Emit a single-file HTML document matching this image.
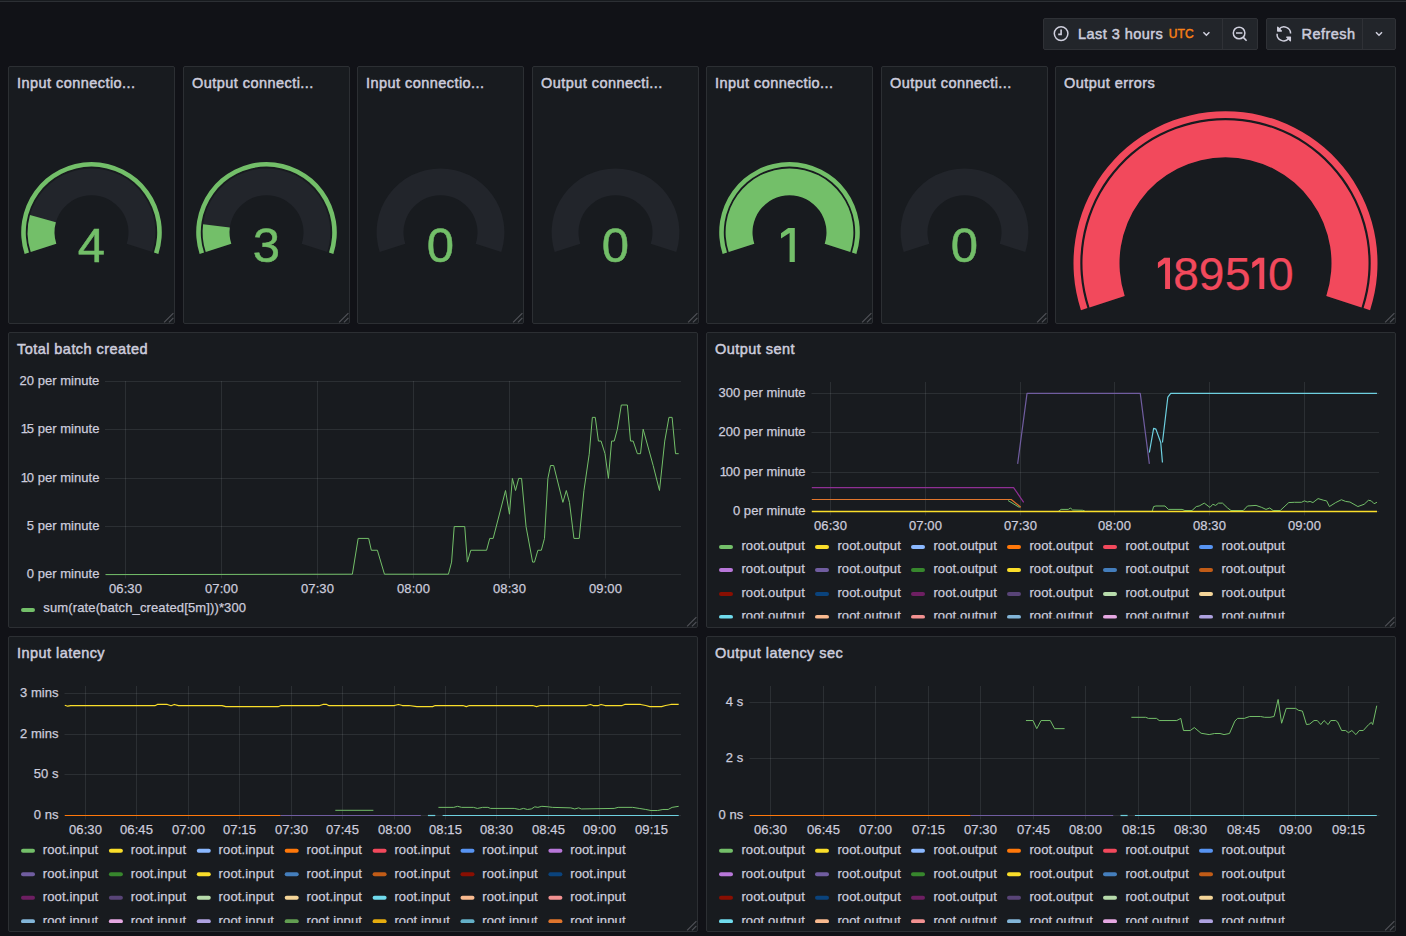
<!DOCTYPE html>
<html><head><meta charset="utf-8"><style>
html,body{margin:0;padding:0;background:#111217;width:1406px;height:936px;overflow:hidden}
.p{position:absolute;background:#181b1f;border:1px solid #2c2f33;border-radius:2px}
.tb{position:absolute;background:#22252a;border:1px solid #2f3136;border-radius:2px}
.tbd{position:absolute;background:#2f3136}
svg{position:absolute;left:0;top:0}
text{font-family:'Liberation Sans', sans-serif}
.t13{stroke:#ccccdc;stroke-width:0.25px}
</style></head><body>
<div class="p" style="left:8px;top:66px;width:165px;height:256px"></div>
<div class="p" style="left:183px;top:66px;width:165px;height:256px"></div>
<div class="p" style="left:357px;top:66px;width:165px;height:256px"></div>
<div class="p" style="left:532px;top:66px;width:165px;height:256px"></div>
<div class="p" style="left:706px;top:66px;width:165px;height:256px"></div>
<div class="p" style="left:881px;top:66px;width:165px;height:256px"></div>
<div class="p" style="left:1055px;top:66px;width:339px;height:256px"></div>
<div class="p" style="left:8px;top:332px;width:688px;height:294px"></div>
<div class="p" style="left:706px;top:332px;width:688px;height:294px"></div>
<div class="p" style="left:8px;top:636px;width:688px;height:294px"></div>
<div class="p" style="left:706px;top:636px;width:688px;height:294px"></div>
<div class="tb" style="left:1043px;top:18px;width:213px;height:30px"></div>
<div class="tbd" style="left:1222px;top:19px;width:1px;height:30px"></div>
<div class="tb" style="left:1266px;top:18px;width:128px;height:30px"></div>
<div class="tbd" style="left:1362px;top:19px;width:1px;height:30px"></div>
<div style="position:absolute;left:0;top:0;width:1406px;height:1px;background:#181b1f"></div>
<div style="position:absolute;left:0;top:1px;width:1406px;height:1px;background:#2c2f34"></div>
<svg width="1406" height="936" viewBox="0 0 1406 936">
<path d="M164.1 322.4 L173.4 313.1 M168.9 322.4 L173.4 317.9" stroke="#4f5157" stroke-width="1.2" fill="none"/>
<path d="M339.1 322.4 L348.4 313.1 M343.9 322.4 L348.4 317.9" stroke="#4f5157" stroke-width="1.2" fill="none"/>
<path d="M513.1 322.4 L522.4 313.1 M517.9 322.4 L522.4 317.9" stroke="#4f5157" stroke-width="1.2" fill="none"/>
<path d="M688.1 322.4 L697.4 313.1 M692.9 322.4 L697.4 317.9" stroke="#4f5157" stroke-width="1.2" fill="none"/>
<path d="M862.1 322.4 L871.4 313.1 M866.9 322.4 L871.4 317.9" stroke="#4f5157" stroke-width="1.2" fill="none"/>
<path d="M1037.1 322.4 L1046.4 313.1 M1041.9 322.4 L1046.4 317.9" stroke="#4f5157" stroke-width="1.2" fill="none"/>
<path d="M1385.1 322.4 L1394.4 313.1 M1389.9 322.4 L1394.4 317.9" stroke="#4f5157" stroke-width="1.2" fill="none"/>
<path d="M687.1 626.4 L696.4 617.1 M691.9 626.4 L696.4 621.9" stroke="#4f5157" stroke-width="1.2" fill="none"/>
<path d="M1385.1 626.4 L1394.4 617.1 M1389.9 626.4 L1394.4 621.9" stroke="#4f5157" stroke-width="1.2" fill="none"/>
<path d="M687.1 930.4 L696.4 921.1 M691.9 930.4 L696.4 925.9" stroke="#4f5157" stroke-width="1.2" fill="none"/>
<path d="M1385.1 930.4 L1394.4 921.1 M1389.9 930.4 L1394.4 925.9" stroke="#4f5157" stroke-width="1.2" fill="none"/>
<text x="17.00" y="88.00" font-size="14.5" font-weight="normal" fill="#ccccdc" text-anchor="start" letter-spacing="0.45" stroke="#ccccdc" stroke-width="0.5">Input connectio...</text>
<text x="192.00" y="88.00" font-size="14.5" font-weight="normal" fill="#ccccdc" text-anchor="start" letter-spacing="0.45" stroke="#ccccdc" stroke-width="0.5">Output connecti...</text>
<text x="366.00" y="88.00" font-size="14.5" font-weight="normal" fill="#ccccdc" text-anchor="start" letter-spacing="0.45" stroke="#ccccdc" stroke-width="0.5">Input connectio...</text>
<text x="541.00" y="88.00" font-size="14.5" font-weight="normal" fill="#ccccdc" text-anchor="start" letter-spacing="0.45" stroke="#ccccdc" stroke-width="0.5">Output connecti...</text>
<text x="715.00" y="88.00" font-size="14.5" font-weight="normal" fill="#ccccdc" text-anchor="start" letter-spacing="0.45" stroke="#ccccdc" stroke-width="0.5">Input connectio...</text>
<text x="890.00" y="88.00" font-size="14.5" font-weight="normal" fill="#ccccdc" text-anchor="start" letter-spacing="0.45" stroke="#ccccdc" stroke-width="0.5">Output connecti...</text>
<text x="1064.00" y="88.00" font-size="14.5" font-weight="normal" fill="#ccccdc" text-anchor="start" letter-spacing="0.45" stroke="#ccccdc" stroke-width="0.5">Output errors</text>
<text x="17.00" y="354.40" font-size="14.5" font-weight="normal" fill="#ccccdc" text-anchor="start" letter-spacing="0.45" stroke="#ccccdc" stroke-width="0.5">Total batch created</text>
<text x="715.00" y="354.40" font-size="14.5" font-weight="normal" fill="#ccccdc" text-anchor="start" letter-spacing="0.45" stroke="#ccccdc" stroke-width="0.5">Output sent</text>
<text x="17.00" y="658.40" font-size="14.5" font-weight="normal" fill="#ccccdc" text-anchor="start" letter-spacing="0.45" stroke="#ccccdc" stroke-width="0.5">Input latency</text>
<text x="715.00" y="658.40" font-size="14.5" font-weight="normal" fill="#ccccdc" text-anchor="start" letter-spacing="0.45" stroke="#ccccdc" stroke-width="0.5">Output latency sec</text>
<path d="M30.73 252.05 A63.9 63.9 0 1 1 152.27 252.05 L126.69 243.73 A37.0 37.0 0 1 0 56.31 243.73 Z" fill="#22252b"/>
<path d="M30.73 252.05 A63.9 63.9 0 0 1 29.98 215.01 L55.88 222.29 A37.0 37.0 0 0 0 56.31 243.73 Z" fill="#73bf69"/>
<path d="M24.64 254.02 A70.3 70.3 0 1 1 158.36 254.02 L153.98 252.60 A65.7 65.7 0 1 0 29.02 252.60 Z" fill="#73bf69"/>
<text x="91.50" y="262.30" font-size="49" font-weight="normal" fill="#73bf69" text-anchor="middle" stroke="#73bf69" stroke-width="0.5">4</text>
<path d="M205.73 252.05 A63.9 63.9 0 1 1 327.27 252.05 L301.69 243.73 A37.0 37.0 0 1 0 231.31 243.73 Z" fill="#22252b"/>
<path d="M205.73 252.05 A63.9 63.9 0 0 1 203.12 224.18 L229.80 227.60 A37.0 37.0 0 0 0 231.31 243.73 Z" fill="#73bf69"/>
<path d="M199.64 254.02 A70.3 70.3 0 1 1 333.36 254.02 L328.98 252.60 A65.7 65.7 0 1 0 204.02 252.60 Z" fill="#73bf69"/>
<text x="266.50" y="262.30" font-size="49" font-weight="normal" fill="#73bf69" text-anchor="middle" stroke="#73bf69" stroke-width="0.5">3</text>
<path d="M379.73 252.05 A63.9 63.9 0 1 1 501.27 252.05 L475.69 243.73 A37.0 37.0 0 1 0 405.31 243.73 Z" fill="#22252b"/>
<text x="440.50" y="262.30" font-size="49" font-weight="normal" fill="#73bf69" text-anchor="middle" stroke="#73bf69" stroke-width="0.5">0</text>
<path d="M554.73 252.05 A63.9 63.9 0 1 1 676.27 252.05 L650.69 243.73 A37.0 37.0 0 1 0 580.31 243.73 Z" fill="#22252b"/>
<text x="615.50" y="262.30" font-size="49" font-weight="normal" fill="#73bf69" text-anchor="middle" stroke="#73bf69" stroke-width="0.5">0</text>
<path d="M728.73 252.05 A63.9 63.9 0 1 1 850.27 252.05 L824.69 243.73 A37.0 37.0 0 1 0 754.31 243.73 Z" fill="#22252b"/>
<path d="M728.73 252.05 A63.9 63.9 0 1 1 850.27 252.05 L824.69 243.73 A37.0 37.0 0 1 0 754.31 243.73 Z" fill="#73bf69"/>
<path d="M722.64 254.02 A70.3 70.3 0 1 1 856.36 254.02 L851.98 252.60 A65.7 65.7 0 1 0 727.02 252.60 Z" fill="#73bf69"/>
<path d="M788.20 228 L794.80 228 L794.80 262 L789.60 262 L789.60 233 L781.00 238.6 L781.00 233.2 Z" fill="#73bf69"/>
<path d="M903.73 252.05 A63.9 63.9 0 1 1 1025.27 252.05 L999.69 243.73 A37.0 37.0 0 1 0 929.31 243.73 Z" fill="#22252b"/>
<text x="964.50" y="262.30" font-size="49" font-weight="normal" fill="#73bf69" text-anchor="middle" stroke="#73bf69" stroke-width="0.5">0</text>
<path d="M1089.50 307.39 A143 143 0 1 1 1361.50 307.39 L1326.31 295.96 A106 106 0 1 0 1124.69 295.96 Z" fill="#22252b"/>
<path d="M1089.50 307.39 A143 143 0 1 1 1361.50 307.39 L1326.31 295.96 A106 106 0 1 0 1124.69 295.96 Z" fill="#f2495c"/>
<path d="M1080.94 310.17 A152 152 0 1 1 1370.06 310.17 L1363.59 308.07 A145.2 145.2 0 1 0 1087.41 308.07 Z" fill="#f2495c"/>
<path d="M1164.30 257.8 L1170.00 257.8 L1170.00 289 L1165.10 289 L1165.10 263.2 L1157.90 268.2 L1157.90 262.6 Z" fill="#f2495c"/>
<path d="M1258.60 257.8 L1264.30 257.8 L1264.30 289 L1259.40 289 L1259.40 263.2 L1252.20 268.2 L1252.20 262.6 Z" fill="#f2495c"/>
<text x="1186.05" y="289.5" font-size="46" fill="#f2495c" text-anchor="middle" stroke="#f2495c" stroke-width="0.25">8</text>
<text x="1211.6" y="289.5" font-size="46" fill="#f2495c" text-anchor="middle" stroke="#f2495c" stroke-width="0.25">9</text>
<text x="1237.75" y="289.5" font-size="46" fill="#f2495c" text-anchor="middle" stroke="#f2495c" stroke-width="0.25">5</text>
<text x="1280.7" y="289.5" font-size="46" fill="#f2495c" text-anchor="middle" stroke="#f2495c" stroke-width="0.25">0</text>
<text x="1078.00" y="39.20" font-size="14.5" font-weight="normal" fill="#ccccdc" text-anchor="start" letter-spacing="0.45" stroke="#ccccdc" stroke-width="0.5">Last 3 hours</text>
<text x="1168.80" y="38.00" font-size="12" font-weight="normal" fill="#f98016" text-anchor="start" stroke="#f98016" stroke-width="0.45" letter-spacing="0.1">UTC</text>
<text x="1301.50" y="39.20" font-size="14.5" font-weight="normal" fill="#ccccdc" text-anchor="start" letter-spacing="0.45" stroke="#ccccdc" stroke-width="0.5">Refresh</text>
<circle cx="1061.1" cy="33.6" r="6.8" stroke="#d0d0de" stroke-width="1.5" fill="none"/>
<path d="M1061.1 29.6 V34.4 H1058.2" stroke="#d0d0de" stroke-width="1.6" fill="none"/>
<path d="M1203.4 32.2 L1206.4 35.2 L1209.4 32.2" stroke="#d0d0de" stroke-width="1.5" fill="none"/>
<path d="M1376.0 32.2 L1379.0 35.2 L1382.0 32.2" stroke="#d0d0de" stroke-width="1.5" fill="none"/>
<circle cx="1239.1" cy="33" r="5.8" stroke="#d0d0de" stroke-width="1.5" fill="none"/>
<path d="M1236 33 H1242.4 M1243.3 37.4 L1246.6 40.7" stroke="#d0d0de" stroke-width="1.6" fill="none"/>
<path d="M1279.0 29.2 A6.6 6.6 0 0 1 1290.6 33.6" stroke="#d0d0de" stroke-width="1.5" fill="none"/>
<path d="M1277.1 33.7 A6.6 6.6 0 0 0 1288.9 38.3" stroke="#d0d0de" stroke-width="1.5" fill="none"/>
<path d="M1277.7 27.3 V31.0 H1281.4 Z" stroke="#d0d0de" stroke-width="1.3" stroke-linejoin="round" fill="#d0d0de"/>
<path d="M1286.7 37.1 H1290.4 V40.8 Z" stroke="#d0d0de" stroke-width="1.3" stroke-linejoin="round" fill="#d0d0de"/>
<path d="M105.0 381.5 H681.0" stroke="rgba(240,250,255,0.09)" stroke-width="1" fill="none"/>
<path d="M105.0 429.5 H681.0" stroke="rgba(240,250,255,0.09)" stroke-width="1" fill="none"/>
<path d="M105.0 478.5 H681.0" stroke="rgba(240,250,255,0.09)" stroke-width="1" fill="none"/>
<path d="M105.0 526.5 H681.0" stroke="rgba(240,250,255,0.09)" stroke-width="1" fill="none"/>
<path d="M105.0 574.5 H681.0" stroke="rgba(240,250,255,0.09)" stroke-width="1" fill="none"/>
<path d="M125.5 381.0 V578.5" stroke="rgba(240,250,255,0.09)" stroke-width="1" fill="none"/>
<path d="M221.5 381.0 V578.5" stroke="rgba(240,250,255,0.09)" stroke-width="1" fill="none"/>
<path d="M317.5 381.0 V578.5" stroke="rgba(240,250,255,0.09)" stroke-width="1" fill="none"/>
<path d="M413.5 381.0 V578.5" stroke="rgba(240,250,255,0.09)" stroke-width="1" fill="none"/>
<path d="M509.5 381.0 V578.5" stroke="rgba(240,250,255,0.09)" stroke-width="1" fill="none"/>
<path d="M605.5 381.0 V578.5" stroke="rgba(240,250,255,0.09)" stroke-width="1" fill="none"/>
<text x="99.40" y="385.30" font-size="13" font-weight="normal" fill="#ccccdc" text-anchor="end" letter-spacing="0.03" class="t13">20 per minute</text>
<text x="99.40" y="433.30" font-size="13" font-weight="normal" fill="#ccccdc" text-anchor="end" letter-spacing="0.03" class="t13"><tspan letter-spacing="-1.3">1</tspan>5 per minute</text>
<text x="99.40" y="482.30" font-size="13" font-weight="normal" fill="#ccccdc" text-anchor="end" letter-spacing="0.03" class="t13"><tspan letter-spacing="-1.3">1</tspan>0 per minute</text>
<text x="99.40" y="530.30" font-size="13" font-weight="normal" fill="#ccccdc" text-anchor="end" letter-spacing="0.03" class="t13">5 per minute</text>
<text x="99.40" y="578.30" font-size="13" font-weight="normal" fill="#ccccdc" text-anchor="end" letter-spacing="0.03" class="t13">0 per minute</text>
<text x="125.50" y="593.30" font-size="13" font-weight="normal" fill="#ccccdc" text-anchor="middle" letter-spacing="0.1" class="t13">06:30</text>
<text x="221.50" y="593.30" font-size="13" font-weight="normal" fill="#ccccdc" text-anchor="middle" letter-spacing="0.1" class="t13">07:00</text>
<text x="317.50" y="593.30" font-size="13" font-weight="normal" fill="#ccccdc" text-anchor="middle" letter-spacing="0.1" class="t13">07:30</text>
<text x="413.50" y="593.30" font-size="13" font-weight="normal" fill="#ccccdc" text-anchor="middle" letter-spacing="0.1" class="t13">08:00</text>
<text x="509.50" y="593.30" font-size="13" font-weight="normal" fill="#ccccdc" text-anchor="middle" letter-spacing="0.1" class="t13">08:30</text>
<text x="605.50" y="593.30" font-size="13" font-weight="normal" fill="#ccccdc" text-anchor="middle" letter-spacing="0.1" class="t13">09:00</text>
<polyline points="105.60,574.60 352.37,574.21 358.16,538.42 368.68,538.42 371.32,550.26 377.37,550.26 384.47,574.21 448.42,574.21 451.58,562.11 454.21,526.58 464.74,526.58 467.37,562.11 470.79,550.26 486.58,550.26 489.74,538.42 493.16,538.42 505.53,490.53 509.47,514.21 512.37,478.42 515.53,490.53 518.68,478.42 521.58,478.42 526.05,526.58 532.63,562.11 534.47,562.11 537.89,550.26 541.32,550.26 544.47,538.42 547.89,478.42 550.53,465.53 553.68,465.53 562.89,502.37 566.32,490.53 569.47,502.37 573.95,538.42 579.21,538.42 583.95,490.53 589.21,454.21 592.37,417.37 595.26,417.37 598.42,441.05 601.05,441.05 605.00,453.68 608.42,478.42 611.58,441.05 614.21,441.05 617.37,429.21 621.32,405.00 627.37,405.00 630.53,441.05 633.16,441.05 637.37,453.68 640.53,453.68 643.16,429.21 653.16,465.53 659.47,490.53 664.74,441.05 668.95,417.37 672.11,417.37 675.53,453.68 678.68,453.68" stroke="#73bf69" stroke-width="1.0" fill="none" stroke-linejoin="round"/>
<rect x="21.0" y="608.0" width="14" height="4" rx="2" fill="#73bf69"/>
<text x="43.30" y="612.40" font-size="13" font-weight="normal" fill="#ccccdc" text-anchor="start" letter-spacing="0.13" class="t13">sum(rate(batch_created[5m]))*300</text>
<path d="M811.5 393.5 H1379.0" stroke="rgba(240,250,255,0.09)" stroke-width="1" fill="none"/>
<path d="M811.5 432.5 H1379.0" stroke="rgba(240,250,255,0.09)" stroke-width="1" fill="none"/>
<path d="M811.5 472.5 H1379.0" stroke="rgba(240,250,255,0.09)" stroke-width="1" fill="none"/>
<path d="M811.5 511.5 H1379.0" stroke="rgba(240,250,255,0.09)" stroke-width="1" fill="none"/>
<path d="M830.5 382.0 V515.5" stroke="rgba(240,250,255,0.09)" stroke-width="1" fill="none"/>
<path d="M925.5 382.0 V515.5" stroke="rgba(240,250,255,0.09)" stroke-width="1" fill="none"/>
<path d="M1020.5 382.0 V515.5" stroke="rgba(240,250,255,0.09)" stroke-width="1" fill="none"/>
<path d="M1114.5 382.0 V515.5" stroke="rgba(240,250,255,0.09)" stroke-width="1" fill="none"/>
<path d="M1209.5 382.0 V515.5" stroke="rgba(240,250,255,0.09)" stroke-width="1" fill="none"/>
<path d="M1304.5 382.0 V515.5" stroke="rgba(240,250,255,0.09)" stroke-width="1" fill="none"/>
<text x="805.60" y="397.30" font-size="13" font-weight="normal" fill="#ccccdc" text-anchor="end" letter-spacing="0.03" class="t13">300 per minute</text>
<text x="805.60" y="436.30" font-size="13" font-weight="normal" fill="#ccccdc" text-anchor="end" letter-spacing="0.03" class="t13">200 per minute</text>
<text x="805.60" y="476.30" font-size="13" font-weight="normal" fill="#ccccdc" text-anchor="end" letter-spacing="0.03" class="t13"><tspan letter-spacing="-1.3">1</tspan>00 per minute</text>
<text x="805.60" y="515.30" font-size="13" font-weight="normal" fill="#ccccdc" text-anchor="end" letter-spacing="0.03" class="t13">0 per minute</text>
<text x="830.50" y="530.00" font-size="13" font-weight="normal" fill="#ccccdc" text-anchor="middle" letter-spacing="0.1" class="t13">06:30</text>
<text x="925.50" y="530.00" font-size="13" font-weight="normal" fill="#ccccdc" text-anchor="middle" letter-spacing="0.1" class="t13">07:00</text>
<text x="1020.50" y="530.00" font-size="13" font-weight="normal" fill="#ccccdc" text-anchor="middle" letter-spacing="0.1" class="t13">07:30</text>
<text x="1114.50" y="530.00" font-size="13" font-weight="normal" fill="#ccccdc" text-anchor="middle" letter-spacing="0.1" class="t13">08:00</text>
<text x="1209.50" y="530.00" font-size="13" font-weight="normal" fill="#ccccdc" text-anchor="middle" letter-spacing="0.1" class="t13">08:30</text>
<text x="1304.50" y="530.00" font-size="13" font-weight="normal" fill="#ccccdc" text-anchor="middle" letter-spacing="0.1" class="t13">09:00</text>
<polyline points="811.80,487.60 1013.60,487.60 1023.70,502.40" stroke="#8f2f94" stroke-width="1.2" fill="none" stroke-linejoin="round"/>
<polyline points="811.80,499.50 1011.20,499.50 1020.80,507.20" stroke="#e0752d" stroke-width="1.2" fill="none" stroke-linejoin="round"/>
<polyline points="1008.00,500.50 1019.50,507.50" stroke="#73bf69" stroke-width="1.0" fill="none" stroke-linejoin="round"/>
<polyline points="1017.64,463.88 1027.03,393.33 1140.26,393.33 1149.36,463.88" stroke="#705da0" stroke-width="1.2" fill="none" stroke-linejoin="round"/>
<polyline points="1149.36,452.50 1153.63,428.32 1155.90,429.17 1160.74,442.55 1162.45,462.46" stroke="#6ed0e0" stroke-width="1.2" fill="none" stroke-linejoin="round"/>
<polyline points="1162.45,442.55 1167.85,397.03 1170.70,393.33 1376.96,393.33" stroke="#6ed0e0" stroke-width="1.2" fill="none" stroke-linejoin="round"/>
<polyline points="1058.32,511.39 1061.17,509.40 1068.28,509.40 1070.55,507.98 1072.55,509.97 1082.50,510.26 1085.35,511.39 1152.20,511.39 1153.63,506.56 1155.90,505.99 1165.01,505.99 1168.42,509.40 1182.08,509.40 1184.92,510.54 1192.03,510.54 1196.30,506.56 1199.15,505.99 1204.27,503.14 1209.96,507.41 1212.80,504.28 1215.65,505.42 1218.49,503.14 1222.48,503.14 1227.60,507.98 1231.01,510.54 1243.24,510.54 1247.51,505.99 1256.05,505.42 1261.74,507.41 1266.00,509.40 1269.70,507.98 1273.12,510.54 1280.23,510.54 1288.76,502.57 1294.45,502.29 1301.56,502.29 1304.41,500.87 1307.25,502.01 1310.10,501.44 1312.94,502.57 1318.07,498.59 1323.76,500.30 1326.60,500.87 1329.45,506.56 1335.70,502.57 1341.39,499.73 1345.66,501.44 1349.93,502.01 1357.89,506.56 1364.15,504.28 1368.42,500.30 1371.27,500.87 1374.11,503.71 1376.96,502.29" stroke="#73bf69" stroke-width="1.0" fill="none" stroke-linejoin="round"/>
<polyline points="811.80,511.50 1377.00,511.50" stroke="#fade2a" stroke-width="1.6" fill="none" stroke-linejoin="round"/>
<clipPath id="cb"><rect x="0" y="0" width="1406" height="618.5"/></clipPath>
<g clip-path="url(#cb)">
<rect x="719.0" y="545.0" width="14" height="4" rx="2" fill="#73bf69"/>
<text x="741.40" y="549.60" font-size="13" font-weight="normal" fill="#ccccdc" text-anchor="start" letter-spacing="0.13" class="t13">root.output</text>
<rect x="815.0" y="545.0" width="14" height="4" rx="2" fill="#fade2a"/>
<text x="837.40" y="549.60" font-size="13" font-weight="normal" fill="#ccccdc" text-anchor="start" letter-spacing="0.13" class="t13">root.output</text>
<rect x="911.0" y="545.0" width="14" height="4" rx="2" fill="#8ab8ff"/>
<text x="933.40" y="549.60" font-size="13" font-weight="normal" fill="#ccccdc" text-anchor="start" letter-spacing="0.13" class="t13">root.output</text>
<rect x="1007.0" y="545.0" width="14" height="4" rx="2" fill="#ff780a"/>
<text x="1029.40" y="549.60" font-size="13" font-weight="normal" fill="#ccccdc" text-anchor="start" letter-spacing="0.13" class="t13">root.output</text>
<rect x="1103.0" y="545.0" width="14" height="4" rx="2" fill="#f2495c"/>
<text x="1125.40" y="549.60" font-size="13" font-weight="normal" fill="#ccccdc" text-anchor="start" letter-spacing="0.13" class="t13">root.output</text>
<rect x="1199.0" y="545.0" width="14" height="4" rx="2" fill="#5794f2"/>
<text x="1221.40" y="549.60" font-size="13" font-weight="normal" fill="#ccccdc" text-anchor="start" letter-spacing="0.13" class="t13">root.output</text>
<rect x="719.0" y="567.9" width="14" height="4" rx="2" fill="#b877d9"/>
<text x="741.40" y="572.50" font-size="13" font-weight="normal" fill="#ccccdc" text-anchor="start" letter-spacing="0.13" class="t13">root.output</text>
<rect x="815.0" y="567.9" width="14" height="4" rx="2" fill="#705da0"/>
<text x="837.40" y="572.50" font-size="13" font-weight="normal" fill="#ccccdc" text-anchor="start" letter-spacing="0.13" class="t13">root.output</text>
<rect x="911.0" y="567.9" width="14" height="4" rx="2" fill="#37872d"/>
<text x="933.40" y="572.50" font-size="13" font-weight="normal" fill="#ccccdc" text-anchor="start" letter-spacing="0.13" class="t13">root.output</text>
<rect x="1007.0" y="567.9" width="14" height="4" rx="2" fill="#fade2a"/>
<text x="1029.40" y="572.50" font-size="13" font-weight="normal" fill="#ccccdc" text-anchor="start" letter-spacing="0.13" class="t13">root.output</text>
<rect x="1103.0" y="567.9" width="14" height="4" rx="2" fill="#447ebc"/>
<text x="1125.40" y="572.50" font-size="13" font-weight="normal" fill="#ccccdc" text-anchor="start" letter-spacing="0.13" class="t13">root.output</text>
<rect x="1199.0" y="567.9" width="14" height="4" rx="2" fill="#c15c17"/>
<text x="1221.40" y="572.50" font-size="13" font-weight="normal" fill="#ccccdc" text-anchor="start" letter-spacing="0.13" class="t13">root.output</text>
<rect x="719.0" y="592.0" width="14" height="4" rx="2" fill="#890f02"/>
<text x="741.40" y="596.60" font-size="13" font-weight="normal" fill="#ccccdc" text-anchor="start" letter-spacing="0.13" class="t13">root.output</text>
<rect x="815.0" y="592.0" width="14" height="4" rx="2" fill="#0a437c"/>
<text x="837.40" y="596.60" font-size="13" font-weight="normal" fill="#ccccdc" text-anchor="start" letter-spacing="0.13" class="t13">root.output</text>
<rect x="911.0" y="592.0" width="14" height="4" rx="2" fill="#6d1f62"/>
<text x="933.40" y="596.60" font-size="13" font-weight="normal" fill="#ccccdc" text-anchor="start" letter-spacing="0.13" class="t13">root.output</text>
<rect x="1007.0" y="592.0" width="14" height="4" rx="2" fill="#584477"/>
<text x="1029.40" y="596.60" font-size="13" font-weight="normal" fill="#ccccdc" text-anchor="start" letter-spacing="0.13" class="t13">root.output</text>
<rect x="1103.0" y="592.0" width="14" height="4" rx="2" fill="#b7dbab"/>
<text x="1125.40" y="596.60" font-size="13" font-weight="normal" fill="#ccccdc" text-anchor="start" letter-spacing="0.13" class="t13">root.output</text>
<rect x="1199.0" y="592.0" width="14" height="4" rx="2" fill="#f4d598"/>
<text x="1221.40" y="596.60" font-size="13" font-weight="normal" fill="#ccccdc" text-anchor="start" letter-spacing="0.13" class="t13">root.output</text>
<rect x="719.0" y="615.0" width="14" height="4" rx="2" fill="#70dbed"/>
<text x="741.40" y="619.60" font-size="13" font-weight="normal" fill="#ccccdc" text-anchor="start" letter-spacing="0.13" class="t13">root.output</text>
<rect x="815.0" y="615.0" width="14" height="4" rx="2" fill="#f9ba8f"/>
<text x="837.40" y="619.60" font-size="13" font-weight="normal" fill="#ccccdc" text-anchor="start" letter-spacing="0.13" class="t13">root.output</text>
<rect x="911.0" y="615.0" width="14" height="4" rx="2" fill="#f29191"/>
<text x="933.40" y="619.60" font-size="13" font-weight="normal" fill="#ccccdc" text-anchor="start" letter-spacing="0.13" class="t13">root.output</text>
<rect x="1007.0" y="615.0" width="14" height="4" rx="2" fill="#82b5d8"/>
<text x="1029.40" y="619.60" font-size="13" font-weight="normal" fill="#ccccdc" text-anchor="start" letter-spacing="0.13" class="t13">root.output</text>
<rect x="1103.0" y="615.0" width="14" height="4" rx="2" fill="#e5a8e2"/>
<text x="1125.40" y="619.60" font-size="13" font-weight="normal" fill="#ccccdc" text-anchor="start" letter-spacing="0.13" class="t13">root.output</text>
<rect x="1199.0" y="615.0" width="14" height="4" rx="2" fill="#aea2e0"/>
<text x="1221.40" y="619.60" font-size="13" font-weight="normal" fill="#ccccdc" text-anchor="start" letter-spacing="0.13" class="t13">root.output</text>
</g>
<path d="M64.5 693.5 H681.0" stroke="rgba(240,250,255,0.09)" stroke-width="1" fill="none"/>
<path d="M64.5 734.5 H681.0" stroke="rgba(240,250,255,0.09)" stroke-width="1" fill="none"/>
<path d="M64.5 774.5 H681.0" stroke="rgba(240,250,255,0.09)" stroke-width="1" fill="none"/>
<path d="M64.5 815.5 H681.0" stroke="rgba(240,250,255,0.09)" stroke-width="1" fill="none"/>
<path d="M85.5 686.0 V819.5" stroke="rgba(240,250,255,0.09)" stroke-width="1" fill="none"/>
<path d="M136.5 686.0 V819.5" stroke="rgba(240,250,255,0.09)" stroke-width="1" fill="none"/>
<path d="M188.5 686.0 V819.5" stroke="rgba(240,250,255,0.09)" stroke-width="1" fill="none"/>
<path d="M239.5 686.0 V819.5" stroke="rgba(240,250,255,0.09)" stroke-width="1" fill="none"/>
<path d="M291.5 686.0 V819.5" stroke="rgba(240,250,255,0.09)" stroke-width="1" fill="none"/>
<path d="M342.5 686.0 V819.5" stroke="rgba(240,250,255,0.09)" stroke-width="1" fill="none"/>
<path d="M394.5 686.0 V819.5" stroke="rgba(240,250,255,0.09)" stroke-width="1" fill="none"/>
<path d="M445.5 686.0 V819.5" stroke="rgba(240,250,255,0.09)" stroke-width="1" fill="none"/>
<path d="M496.5 686.0 V819.5" stroke="rgba(240,250,255,0.09)" stroke-width="1" fill="none"/>
<path d="M548.5 686.0 V819.5" stroke="rgba(240,250,255,0.09)" stroke-width="1" fill="none"/>
<path d="M599.5 686.0 V819.5" stroke="rgba(240,250,255,0.09)" stroke-width="1" fill="none"/>
<path d="M651.5 686.0 V819.5" stroke="rgba(240,250,255,0.09)" stroke-width="1" fill="none"/>
<text x="58.50" y="697.30" font-size="13" font-weight="normal" fill="#ccccdc" text-anchor="end" letter-spacing="0.03" class="t13">3 mins</text>
<text x="58.50" y="738.30" font-size="13" font-weight="normal" fill="#ccccdc" text-anchor="end" letter-spacing="0.03" class="t13">2 mins</text>
<text x="58.50" y="778.30" font-size="13" font-weight="normal" fill="#ccccdc" text-anchor="end" letter-spacing="0.03" class="t13">50 s</text>
<text x="58.50" y="819.30" font-size="13" font-weight="normal" fill="#ccccdc" text-anchor="end" letter-spacing="0.03" class="t13">0 ns</text>
<text x="85.50" y="834.20" font-size="13" font-weight="normal" fill="#ccccdc" text-anchor="middle" letter-spacing="0.1" class="t13">06:30</text>
<text x="136.50" y="834.20" font-size="13" font-weight="normal" fill="#ccccdc" text-anchor="middle" letter-spacing="0.1" class="t13">06:45</text>
<text x="188.50" y="834.20" font-size="13" font-weight="normal" fill="#ccccdc" text-anchor="middle" letter-spacing="0.1" class="t13">07:00</text>
<text x="239.50" y="834.20" font-size="13" font-weight="normal" fill="#ccccdc" text-anchor="middle" letter-spacing="0.1" class="t13">07:15</text>
<text x="291.50" y="834.20" font-size="13" font-weight="normal" fill="#ccccdc" text-anchor="middle" letter-spacing="0.1" class="t13">07:30</text>
<text x="342.50" y="834.20" font-size="13" font-weight="normal" fill="#ccccdc" text-anchor="middle" letter-spacing="0.1" class="t13">07:45</text>
<text x="394.50" y="834.20" font-size="13" font-weight="normal" fill="#ccccdc" text-anchor="middle" letter-spacing="0.1" class="t13">08:00</text>
<text x="445.50" y="834.20" font-size="13" font-weight="normal" fill="#ccccdc" text-anchor="middle" letter-spacing="0.1" class="t13">08:15</text>
<text x="496.50" y="834.20" font-size="13" font-weight="normal" fill="#ccccdc" text-anchor="middle" letter-spacing="0.1" class="t13">08:30</text>
<text x="548.50" y="834.20" font-size="13" font-weight="normal" fill="#ccccdc" text-anchor="middle" letter-spacing="0.1" class="t13">08:45</text>
<text x="599.50" y="834.20" font-size="13" font-weight="normal" fill="#ccccdc" text-anchor="middle" letter-spacing="0.1" class="t13">09:00</text>
<text x="651.50" y="834.20" font-size="13" font-weight="normal" fill="#ccccdc" text-anchor="middle" letter-spacing="0.1" class="t13">09:15</text>
<polyline points="64.80,815.50 280.60,815.50" stroke="#ff780a" stroke-width="1.2" fill="none" stroke-linejoin="round"/>
<polyline points="280.60,815.50 420.80,815.50" stroke="#705da0" stroke-width="1.2" fill="none" stroke-linejoin="round"/>
<polyline points="427.90,815.50 435.30,815.50" stroke="#6ed0e0" stroke-width="1.2" fill="none" stroke-linejoin="round"/>
<polyline points="442.60,815.50 678.70,815.50" stroke="#6ed0e0" stroke-width="1.2" fill="none" stroke-linejoin="round"/>
<polyline points="335.30,810.30 373.40,810.30" stroke="#73bf69" stroke-width="1.0" fill="none" stroke-linejoin="round"/>
<polyline points="438.42,807.37 453.68,807.37 457.63,806.32 461.58,807.37 473.42,807.37 477.37,808.42 482.63,807.37 487.89,807.37 490.53,808.42 514.21,808.42 519.47,809.47 523.42,808.42 527.37,809.47 531.32,808.95 534.74,806.84 537.89,807.37 541.84,806.32 548.42,806.84 552.37,807.37 570.79,807.89 574.74,808.95 578.68,807.89 581.32,808.95 614.21,808.42 618.16,807.37 632.63,807.37 639.21,808.42 645.79,809.47 651.05,810.53 657.63,810.53 662.89,809.47 668.16,809.47 672.11,807.37 678.68,806.32" stroke="#73bf69" stroke-width="1.0" fill="none" stroke-linejoin="round"/>
<polyline points="64.76,705.21 67.75,706.20 70.73,705.70 154.88,705.70 157.37,704.46 167.32,704.46 171.06,705.70 174.29,704.46 178.53,705.70 222.09,705.70 225.82,706.70 278.10,706.70 280.59,705.70 319.18,705.70 322.91,704.46 326.65,704.46 329.14,705.70 330.00,705.53 394.47,705.53 398.42,704.47 402.37,705.53 408.95,705.53 416.84,706.58 432.63,706.58 435.26,705.53 462.89,705.53 466.32,706.58 469.47,705.53 532.63,705.53 536.58,706.58 540.53,705.53 586.58,705.53 590.53,704.47 593.16,705.53 598.42,705.53 601.05,704.47 605.00,705.53 622.11,705.53 624.74,704.47 640.53,704.47 645.79,705.53 649.74,706.58 661.58,706.58 665.53,705.53 670.79,704.47 678.68,704.47" stroke="#fade2a" stroke-width="1.2" fill="none" stroke-linejoin="round"/>
<clipPath id="cc"><rect x="0" y="0" width="1406" height="922.9"/></clipPath>
<g clip-path="url(#cc)">
<rect x="21.0" y="848.8" width="14" height="4" rx="2" fill="#73bf69"/>
<text x="42.80" y="854.20" font-size="13" font-weight="normal" fill="#ccccdc" text-anchor="start" letter-spacing="0.13" class="t13">root.input</text>
<rect x="108.9" y="848.8" width="14" height="4" rx="2" fill="#fade2a"/>
<text x="130.70" y="854.20" font-size="13" font-weight="normal" fill="#ccccdc" text-anchor="start" letter-spacing="0.13" class="t13">root.input</text>
<rect x="196.8" y="848.8" width="14" height="4" rx="2" fill="#8ab8ff"/>
<text x="218.60" y="854.20" font-size="13" font-weight="normal" fill="#ccccdc" text-anchor="start" letter-spacing="0.13" class="t13">root.input</text>
<rect x="284.7" y="848.8" width="14" height="4" rx="2" fill="#ff780a"/>
<text x="306.50" y="854.20" font-size="13" font-weight="normal" fill="#ccccdc" text-anchor="start" letter-spacing="0.13" class="t13">root.input</text>
<rect x="372.6" y="848.8" width="14" height="4" rx="2" fill="#f2495c"/>
<text x="394.40" y="854.20" font-size="13" font-weight="normal" fill="#ccccdc" text-anchor="start" letter-spacing="0.13" class="t13">root.input</text>
<rect x="460.5" y="848.8" width="14" height="4" rx="2" fill="#5794f2"/>
<text x="482.30" y="854.20" font-size="13" font-weight="normal" fill="#ccccdc" text-anchor="start" letter-spacing="0.13" class="t13">root.input</text>
<rect x="548.4" y="848.8" width="14" height="4" rx="2" fill="#b877d9"/>
<text x="570.20" y="854.20" font-size="13" font-weight="normal" fill="#ccccdc" text-anchor="start" letter-spacing="0.13" class="t13">root.input</text>
<rect x="21.0" y="872.3" width="14" height="4" rx="2" fill="#705da0"/>
<text x="42.80" y="877.70" font-size="13" font-weight="normal" fill="#ccccdc" text-anchor="start" letter-spacing="0.13" class="t13">root.input</text>
<rect x="108.9" y="872.3" width="14" height="4" rx="2" fill="#37872d"/>
<text x="130.70" y="877.70" font-size="13" font-weight="normal" fill="#ccccdc" text-anchor="start" letter-spacing="0.13" class="t13">root.input</text>
<rect x="196.8" y="872.3" width="14" height="4" rx="2" fill="#fade2a"/>
<text x="218.60" y="877.70" font-size="13" font-weight="normal" fill="#ccccdc" text-anchor="start" letter-spacing="0.13" class="t13">root.input</text>
<rect x="284.7" y="872.3" width="14" height="4" rx="2" fill="#447ebc"/>
<text x="306.50" y="877.70" font-size="13" font-weight="normal" fill="#ccccdc" text-anchor="start" letter-spacing="0.13" class="t13">root.input</text>
<rect x="372.6" y="872.3" width="14" height="4" rx="2" fill="#c15c17"/>
<text x="394.40" y="877.70" font-size="13" font-weight="normal" fill="#ccccdc" text-anchor="start" letter-spacing="0.13" class="t13">root.input</text>
<rect x="460.5" y="872.3" width="14" height="4" rx="2" fill="#890f02"/>
<text x="482.30" y="877.70" font-size="13" font-weight="normal" fill="#ccccdc" text-anchor="start" letter-spacing="0.13" class="t13">root.input</text>
<rect x="548.4" y="872.3" width="14" height="4" rx="2" fill="#0a437c"/>
<text x="570.20" y="877.70" font-size="13" font-weight="normal" fill="#ccccdc" text-anchor="start" letter-spacing="0.13" class="t13">root.input</text>
<rect x="21.0" y="895.8" width="14" height="4" rx="2" fill="#6d1f62"/>
<text x="42.80" y="901.20" font-size="13" font-weight="normal" fill="#ccccdc" text-anchor="start" letter-spacing="0.13" class="t13">root.input</text>
<rect x="108.9" y="895.8" width="14" height="4" rx="2" fill="#584477"/>
<text x="130.70" y="901.20" font-size="13" font-weight="normal" fill="#ccccdc" text-anchor="start" letter-spacing="0.13" class="t13">root.input</text>
<rect x="196.8" y="895.8" width="14" height="4" rx="2" fill="#b7dbab"/>
<text x="218.60" y="901.20" font-size="13" font-weight="normal" fill="#ccccdc" text-anchor="start" letter-spacing="0.13" class="t13">root.input</text>
<rect x="284.7" y="895.8" width="14" height="4" rx="2" fill="#f4d598"/>
<text x="306.50" y="901.20" font-size="13" font-weight="normal" fill="#ccccdc" text-anchor="start" letter-spacing="0.13" class="t13">root.input</text>
<rect x="372.6" y="895.8" width="14" height="4" rx="2" fill="#70dbed"/>
<text x="394.40" y="901.20" font-size="13" font-weight="normal" fill="#ccccdc" text-anchor="start" letter-spacing="0.13" class="t13">root.input</text>
<rect x="460.5" y="895.8" width="14" height="4" rx="2" fill="#f9ba8f"/>
<text x="482.30" y="901.20" font-size="13" font-weight="normal" fill="#ccccdc" text-anchor="start" letter-spacing="0.13" class="t13">root.input</text>
<rect x="548.4" y="895.8" width="14" height="4" rx="2" fill="#f29191"/>
<text x="570.20" y="901.20" font-size="13" font-weight="normal" fill="#ccccdc" text-anchor="start" letter-spacing="0.13" class="t13">root.input</text>
<rect x="21.0" y="919.2" width="14" height="4" rx="2" fill="#82b5d8"/>
<text x="42.80" y="924.60" font-size="13" font-weight="normal" fill="#ccccdc" text-anchor="start" letter-spacing="0.13" class="t13">root.input</text>
<rect x="108.9" y="919.2" width="14" height="4" rx="2" fill="#e5a8e2"/>
<text x="130.70" y="924.60" font-size="13" font-weight="normal" fill="#ccccdc" text-anchor="start" letter-spacing="0.13" class="t13">root.input</text>
<rect x="196.8" y="919.2" width="14" height="4" rx="2" fill="#aea2e0"/>
<text x="218.60" y="924.60" font-size="13" font-weight="normal" fill="#ccccdc" text-anchor="start" letter-spacing="0.13" class="t13">root.input</text>
<rect x="284.7" y="919.2" width="14" height="4" rx="2" fill="#629e51"/>
<text x="306.50" y="924.60" font-size="13" font-weight="normal" fill="#ccccdc" text-anchor="start" letter-spacing="0.13" class="t13">root.input</text>
<rect x="372.6" y="919.2" width="14" height="4" rx="2" fill="#e5ac0e"/>
<text x="394.40" y="924.60" font-size="13" font-weight="normal" fill="#ccccdc" text-anchor="start" letter-spacing="0.13" class="t13">root.input</text>
<rect x="460.5" y="919.2" width="14" height="4" rx="2" fill="#64b0c8"/>
<text x="482.30" y="924.60" font-size="13" font-weight="normal" fill="#ccccdc" text-anchor="start" letter-spacing="0.13" class="t13">root.input</text>
<rect x="548.4" y="919.2" width="14" height="4" rx="2" fill="#e0752d"/>
<text x="570.20" y="924.60" font-size="13" font-weight="normal" fill="#ccccdc" text-anchor="start" letter-spacing="0.13" class="t13">root.input</text>
</g>
<path d="M749.5 702.5 H1379.5" stroke="rgba(240,250,255,0.09)" stroke-width="1" fill="none"/>
<path d="M749.5 758.5 H1379.5" stroke="rgba(240,250,255,0.09)" stroke-width="1" fill="none"/>
<path d="M749.5 815.5 H1379.5" stroke="rgba(240,250,255,0.09)" stroke-width="1" fill="none"/>
<path d="M770.5 686.0 V819.5" stroke="rgba(240,250,255,0.09)" stroke-width="1" fill="none"/>
<path d="M823.5 686.0 V819.5" stroke="rgba(240,250,255,0.09)" stroke-width="1" fill="none"/>
<path d="M875.5 686.0 V819.5" stroke="rgba(240,250,255,0.09)" stroke-width="1" fill="none"/>
<path d="M928.5 686.0 V819.5" stroke="rgba(240,250,255,0.09)" stroke-width="1" fill="none"/>
<path d="M980.5 686.0 V819.5" stroke="rgba(240,250,255,0.09)" stroke-width="1" fill="none"/>
<path d="M1033.5 686.0 V819.5" stroke="rgba(240,250,255,0.09)" stroke-width="1" fill="none"/>
<path d="M1085.5 686.0 V819.5" stroke="rgba(240,250,255,0.09)" stroke-width="1" fill="none"/>
<path d="M1138.5 686.0 V819.5" stroke="rgba(240,250,255,0.09)" stroke-width="1" fill="none"/>
<path d="M1190.5 686.0 V819.5" stroke="rgba(240,250,255,0.09)" stroke-width="1" fill="none"/>
<path d="M1243.5 686.0 V819.5" stroke="rgba(240,250,255,0.09)" stroke-width="1" fill="none"/>
<path d="M1295.5 686.0 V819.5" stroke="rgba(240,250,255,0.09)" stroke-width="1" fill="none"/>
<path d="M1348.5 686.0 V819.5" stroke="rgba(240,250,255,0.09)" stroke-width="1" fill="none"/>
<text x="743.30" y="706.30" font-size="13" font-weight="normal" fill="#ccccdc" text-anchor="end" letter-spacing="0.03" class="t13">4 s</text>
<text x="743.30" y="762.30" font-size="13" font-weight="normal" fill="#ccccdc" text-anchor="end" letter-spacing="0.03" class="t13">2 s</text>
<text x="743.30" y="819.30" font-size="13" font-weight="normal" fill="#ccccdc" text-anchor="end" letter-spacing="0.03" class="t13">0 ns</text>
<text x="770.50" y="834.20" font-size="13" font-weight="normal" fill="#ccccdc" text-anchor="middle" letter-spacing="0.1" class="t13">06:30</text>
<text x="823.50" y="834.20" font-size="13" font-weight="normal" fill="#ccccdc" text-anchor="middle" letter-spacing="0.1" class="t13">06:45</text>
<text x="875.50" y="834.20" font-size="13" font-weight="normal" fill="#ccccdc" text-anchor="middle" letter-spacing="0.1" class="t13">07:00</text>
<text x="928.50" y="834.20" font-size="13" font-weight="normal" fill="#ccccdc" text-anchor="middle" letter-spacing="0.1" class="t13">07:15</text>
<text x="980.50" y="834.20" font-size="13" font-weight="normal" fill="#ccccdc" text-anchor="middle" letter-spacing="0.1" class="t13">07:30</text>
<text x="1033.50" y="834.20" font-size="13" font-weight="normal" fill="#ccccdc" text-anchor="middle" letter-spacing="0.1" class="t13">07:45</text>
<text x="1085.50" y="834.20" font-size="13" font-weight="normal" fill="#ccccdc" text-anchor="middle" letter-spacing="0.1" class="t13">08:00</text>
<text x="1138.50" y="834.20" font-size="13" font-weight="normal" fill="#ccccdc" text-anchor="middle" letter-spacing="0.1" class="t13">08:15</text>
<text x="1190.50" y="834.20" font-size="13" font-weight="normal" fill="#ccccdc" text-anchor="middle" letter-spacing="0.1" class="t13">08:30</text>
<text x="1243.50" y="834.20" font-size="13" font-weight="normal" fill="#ccccdc" text-anchor="middle" letter-spacing="0.1" class="t13">08:45</text>
<text x="1295.50" y="834.20" font-size="13" font-weight="normal" fill="#ccccdc" text-anchor="middle" letter-spacing="0.1" class="t13">09:00</text>
<text x="1348.50" y="834.20" font-size="13" font-weight="normal" fill="#ccccdc" text-anchor="middle" letter-spacing="0.1" class="t13">09:15</text>
<polyline points="749.60,815.50 970.60,815.50" stroke="#ff780a" stroke-width="1.2" fill="none" stroke-linejoin="round"/>
<polyline points="970.60,815.50 1113.20,815.50" stroke="#705da0" stroke-width="1.2" fill="none" stroke-linejoin="round"/>
<polyline points="1120.50,815.50 1127.60,815.50" stroke="#6ed0e0" stroke-width="1.2" fill="none" stroke-linejoin="round"/>
<polyline points="1134.90,815.50 1376.80,815.50" stroke="#6ed0e0" stroke-width="1.2" fill="none" stroke-linejoin="round"/>
<polyline points="1025.95,720.54 1032.97,720.54 1036.76,728.65 1041.08,720.54 1050.27,720.54 1054.59,728.65 1064.59,728.65" stroke="#73bf69" stroke-width="1.0" fill="none" stroke-linejoin="round"/>
<polyline points="1131.35,717.30 1145.68,717.30 1148.38,718.38 1156.49,718.38 1159.19,720.54 1176.76,720.54 1180.81,718.38 1183.51,730.54 1190.27,730.54 1194.32,727.57 1201.08,733.24 1209.19,734.59 1214.59,733.51 1220.00,733.51 1224.05,734.59 1229.46,733.51 1234.86,721.08 1237.57,718.38 1244.32,718.38 1249.73,716.49 1260.54,716.49 1264.59,717.30 1270.00,717.30 1274.05,716.49 1278.11,699.46 1281.62,723.24 1286.22,708.38 1295.68,708.38 1298.38,710.27 1302.43,711.08 1306.49,724.59 1309.73,724.05 1314.05,720.54 1317.30,720.54 1320.81,724.59 1324.05,720.54 1328.11,724.59 1330.81,720.54 1335.68,720.54 1337.57,721.89 1341.62,730.54 1345.68,730.54 1348.38,732.70 1351.89,730.54 1355.95,734.59 1359.19,730.54 1363.24,730.54 1368.65,724.59 1371.35,722.43 1372.70,724.59 1376.76,705.68" stroke="#73bf69" stroke-width="1.0" fill="none" stroke-linejoin="round"/>
<clipPath id="cd"><rect x="0" y="0" width="1406" height="922.9"/></clipPath>
<g clip-path="url(#cd)">
<rect x="719.0" y="848.8" width="14" height="4" rx="2" fill="#73bf69"/>
<text x="741.40" y="854.20" font-size="13" font-weight="normal" fill="#ccccdc" text-anchor="start" letter-spacing="0.13" class="t13">root.output</text>
<rect x="815.0" y="848.8" width="14" height="4" rx="2" fill="#fade2a"/>
<text x="837.40" y="854.20" font-size="13" font-weight="normal" fill="#ccccdc" text-anchor="start" letter-spacing="0.13" class="t13">root.output</text>
<rect x="911.0" y="848.8" width="14" height="4" rx="2" fill="#8ab8ff"/>
<text x="933.40" y="854.20" font-size="13" font-weight="normal" fill="#ccccdc" text-anchor="start" letter-spacing="0.13" class="t13">root.output</text>
<rect x="1007.0" y="848.8" width="14" height="4" rx="2" fill="#ff780a"/>
<text x="1029.40" y="854.20" font-size="13" font-weight="normal" fill="#ccccdc" text-anchor="start" letter-spacing="0.13" class="t13">root.output</text>
<rect x="1103.0" y="848.8" width="14" height="4" rx="2" fill="#f2495c"/>
<text x="1125.40" y="854.20" font-size="13" font-weight="normal" fill="#ccccdc" text-anchor="start" letter-spacing="0.13" class="t13">root.output</text>
<rect x="1199.0" y="848.8" width="14" height="4" rx="2" fill="#5794f2"/>
<text x="1221.40" y="854.20" font-size="13" font-weight="normal" fill="#ccccdc" text-anchor="start" letter-spacing="0.13" class="t13">root.output</text>
<rect x="719.0" y="872.3" width="14" height="4" rx="2" fill="#b877d9"/>
<text x="741.40" y="877.70" font-size="13" font-weight="normal" fill="#ccccdc" text-anchor="start" letter-spacing="0.13" class="t13">root.output</text>
<rect x="815.0" y="872.3" width="14" height="4" rx="2" fill="#705da0"/>
<text x="837.40" y="877.70" font-size="13" font-weight="normal" fill="#ccccdc" text-anchor="start" letter-spacing="0.13" class="t13">root.output</text>
<rect x="911.0" y="872.3" width="14" height="4" rx="2" fill="#37872d"/>
<text x="933.40" y="877.70" font-size="13" font-weight="normal" fill="#ccccdc" text-anchor="start" letter-spacing="0.13" class="t13">root.output</text>
<rect x="1007.0" y="872.3" width="14" height="4" rx="2" fill="#fade2a"/>
<text x="1029.40" y="877.70" font-size="13" font-weight="normal" fill="#ccccdc" text-anchor="start" letter-spacing="0.13" class="t13">root.output</text>
<rect x="1103.0" y="872.3" width="14" height="4" rx="2" fill="#447ebc"/>
<text x="1125.40" y="877.70" font-size="13" font-weight="normal" fill="#ccccdc" text-anchor="start" letter-spacing="0.13" class="t13">root.output</text>
<rect x="1199.0" y="872.3" width="14" height="4" rx="2" fill="#c15c17"/>
<text x="1221.40" y="877.70" font-size="13" font-weight="normal" fill="#ccccdc" text-anchor="start" letter-spacing="0.13" class="t13">root.output</text>
<rect x="719.0" y="895.8" width="14" height="4" rx="2" fill="#890f02"/>
<text x="741.40" y="901.20" font-size="13" font-weight="normal" fill="#ccccdc" text-anchor="start" letter-spacing="0.13" class="t13">root.output</text>
<rect x="815.0" y="895.8" width="14" height="4" rx="2" fill="#0a437c"/>
<text x="837.40" y="901.20" font-size="13" font-weight="normal" fill="#ccccdc" text-anchor="start" letter-spacing="0.13" class="t13">root.output</text>
<rect x="911.0" y="895.8" width="14" height="4" rx="2" fill="#6d1f62"/>
<text x="933.40" y="901.20" font-size="13" font-weight="normal" fill="#ccccdc" text-anchor="start" letter-spacing="0.13" class="t13">root.output</text>
<rect x="1007.0" y="895.8" width="14" height="4" rx="2" fill="#584477"/>
<text x="1029.40" y="901.20" font-size="13" font-weight="normal" fill="#ccccdc" text-anchor="start" letter-spacing="0.13" class="t13">root.output</text>
<rect x="1103.0" y="895.8" width="14" height="4" rx="2" fill="#b7dbab"/>
<text x="1125.40" y="901.20" font-size="13" font-weight="normal" fill="#ccccdc" text-anchor="start" letter-spacing="0.13" class="t13">root.output</text>
<rect x="1199.0" y="895.8" width="14" height="4" rx="2" fill="#f4d598"/>
<text x="1221.40" y="901.20" font-size="13" font-weight="normal" fill="#ccccdc" text-anchor="start" letter-spacing="0.13" class="t13">root.output</text>
<rect x="719.0" y="919.2" width="14" height="4" rx="2" fill="#70dbed"/>
<text x="741.40" y="924.60" font-size="13" font-weight="normal" fill="#ccccdc" text-anchor="start" letter-spacing="0.13" class="t13">root.output</text>
<rect x="815.0" y="919.2" width="14" height="4" rx="2" fill="#f9ba8f"/>
<text x="837.40" y="924.60" font-size="13" font-weight="normal" fill="#ccccdc" text-anchor="start" letter-spacing="0.13" class="t13">root.output</text>
<rect x="911.0" y="919.2" width="14" height="4" rx="2" fill="#f29191"/>
<text x="933.40" y="924.60" font-size="13" font-weight="normal" fill="#ccccdc" text-anchor="start" letter-spacing="0.13" class="t13">root.output</text>
<rect x="1007.0" y="919.2" width="14" height="4" rx="2" fill="#82b5d8"/>
<text x="1029.40" y="924.60" font-size="13" font-weight="normal" fill="#ccccdc" text-anchor="start" letter-spacing="0.13" class="t13">root.output</text>
<rect x="1103.0" y="919.2" width="14" height="4" rx="2" fill="#e5a8e2"/>
<text x="1125.40" y="924.60" font-size="13" font-weight="normal" fill="#ccccdc" text-anchor="start" letter-spacing="0.13" class="t13">root.output</text>
<rect x="1199.0" y="919.2" width="14" height="4" rx="2" fill="#aea2e0"/>
<text x="1221.40" y="924.60" font-size="13" font-weight="normal" fill="#ccccdc" text-anchor="start" letter-spacing="0.13" class="t13">root.output</text>
</g>
</svg>
</body></html>
